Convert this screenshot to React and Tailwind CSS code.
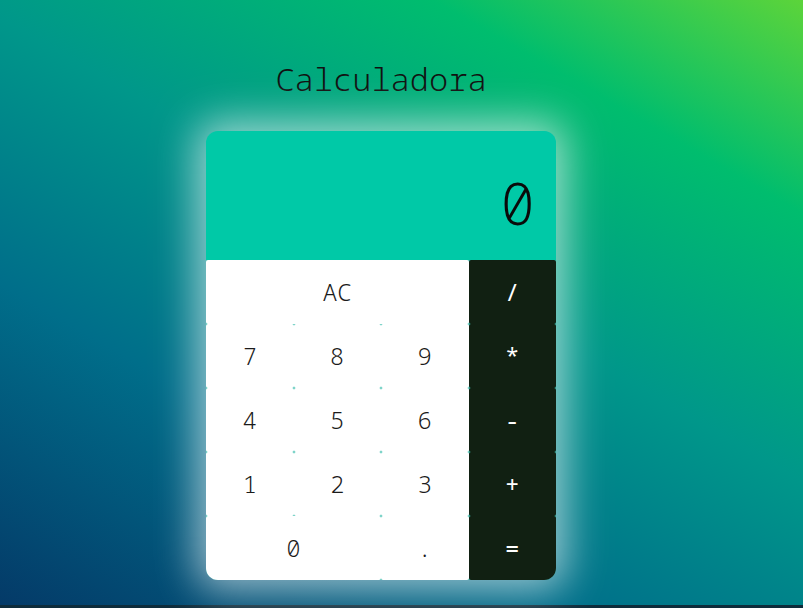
const font = { fontFamily: '"Noto Sans Mono", "DejaVu Sans Mono", monospace' };

function Key({ children, className = '' }) {
  return (
    <div className={`flex items-center justify-center rounded-[2px] ${className}`}>
      {children}
    </div>
  );
}

export default function App() {
  const num = 'bg-white text-[#1b1b1b] font-light';
  const op = 'bg-[#112012] text-white font-normal';
  return (
    <div className="w-[803px] h-[608px] overflow-hidden bg-[#0e2c3b]" style={font}>
      <div className="h-[605px] w-full bg-[linear-gradient(30deg,#043a68_0%,#006e8a_30%,#00978a_55%,#00bd6e_80%,#5cd43a_100%)]">
        <div className="w-[762px] flex flex-col items-center pt-[59px]">
          <h1 className="text-[32px] leading-[40px] font-light text-[#111]">Calculadora</h1>
          <div className="mt-8 w-[350px] rounded-[12px] overflow-hidden bg-[#3fbfae] shadow-[0_0_40px_10px_rgba(255,255,255,0.6)]">
            <div className="h-[129px] bg-[#00c9a7] flex justify-end pt-[43px] pr-[21px]">
              <span className="text-[58px] leading-[58px] font-light text-[#0a0a0a]">0</span>
            </div>
            <div className="grid grid-cols-4 grid-rows-[repeat(5,64px)] text-[24px] leading-none">
              <Key className={`col-span-3 ${num}`}>AC</Key>
              <Key className={op}>/</Key>
              <Key className={num}>7</Key>
              <Key className={num}>8</Key>
              <Key className={num}>9</Key>
              <Key className={op}>*</Key>
              <Key className={num}>4</Key>
              <Key className={num}>5</Key>
              <Key className={num}>6</Key>
              <Key className={op}>-</Key>
              <Key className={num}>1</Key>
              <Key className={num}>2</Key>
              <Key className={num}>3</Key>
              <Key className={op}>+</Key>
              <Key className={`col-span-2 ${num}`}>0</Key>
              <Key className={num}>.</Key>
              <Key className={op}>=</Key>
            </div>
          </div>
        </div>
      </div>
    </div>
  );
}
